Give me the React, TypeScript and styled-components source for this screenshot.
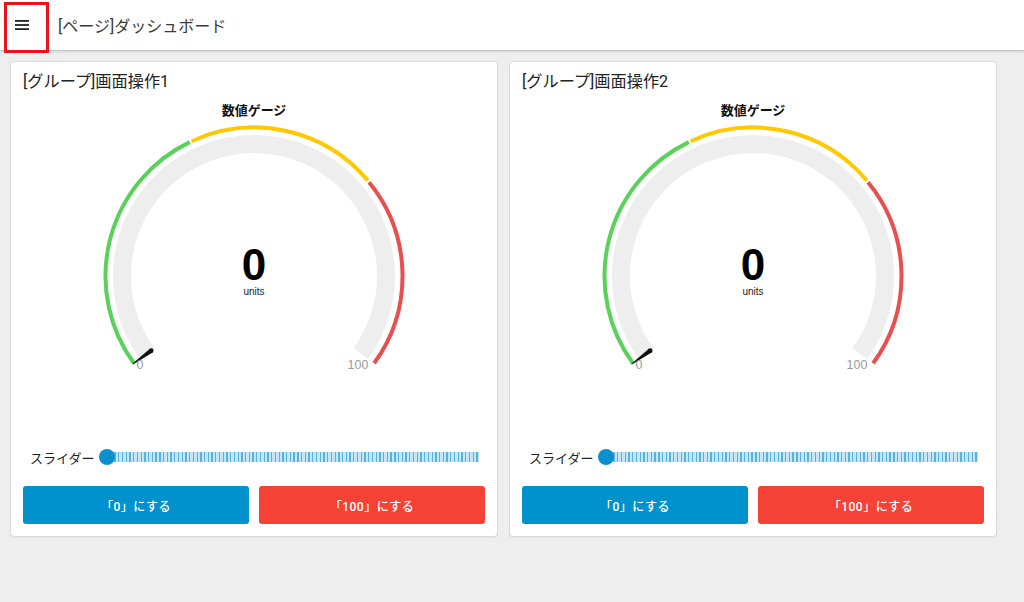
import React from 'react'
import styled, { createGlobalStyle } from 'styled-components'

const GlobalStyle = createGlobalStyle`
  html, body {
    margin: 0;
    padding: 0;
    background: #eeeeee;
    font-family: Roboto, "Noto Sans CJK JP", sans-serif;
  }
  #root {
    min-height: 602px;
  }
`

const Page = styled.div`
  position: relative;
  min-height: 602px;
  background: #eeeeee;
`

const HeaderBar = styled.header`
  height: 50px;
  display: flex;
  align-items: center;
  background: #ffffff;
  border-bottom: 1px solid #c9c9c9;
  box-shadow: 0 1px 2px rgba(0, 0, 0, 0.12);
`

const MenuButton = styled.div`
  width: 44px;
  height: 44px;
  display: flex;
  align-items: center;
  justify-content: center;
`

const HeaderTitle = styled.div`
  margin-left: 14px;
  font-size: 16px;
  color: #3a3a3a;
`

// red annotation frame drawn over the menu button
const Highlight = styled.div`
  position: absolute;
  box-sizing: border-box;
  left: 4px;
  top: 2px;
  width: 45px;
  height: 51px;
  border: 3px solid #e8141b;
`

const Groups = styled.main`
  display: grid;
  grid-template-columns: repeat(2, 488px);
  gap: 11px;
  padding: 10px;
  align-items: start;
`

const Card = styled.section`
  background: #ffffff;
  border: 1px solid #dadada;
  border-radius: 4px;
  padding: 8px 12px 12px;
  box-shadow: 0 1px 1px rgba(0, 0, 0, 0.05);
`

const GroupTitle = styled.div`
  height: 24px;
  line-height: 24px;
  font-size: 16.2px;
  color: #222;
`

const GaugeLabel = styled.div`
  margin-top: 8px;
  height: 18px;
  line-height: 18px;
  text-align: center;
  font-size: 13px;
  font-weight: bold;
  color: #111;
`

const GaugeSvg = styled.svg`
  display: block;
  width: 462px;
  height: 321px;
`

const SliderRow = styled.div`
  height: 32px;
  display: flex;
  align-items: center;
  padding: 0 6px 0 7px;
`

const SliderLabel = styled.span`
  font-size: 13px;
  color: #222;
  margin-right: 5px;
`

const Track = styled.div`
  position: relative;
  flex: 1;
  height: 10px;
  margin-left: 8px;
  background: repeating-linear-gradient(
    to right,
    #56b3e0 0,
    #56b3e0 1.3px,
    #c6e6f5 1.3px,
    #c6e6f5 3.73px
  );
`

const Thumb = styled.div`
  position: absolute;
  left: -8px;
  top: -3px;
  width: 16px;
  height: 16px;
  border-radius: 50%;
  background: #0a8fcf;
`

const ButtonRow = styled.div`
  margin-top: 13px;
  display: grid;
  grid-template-columns: 1fr 1fr;
  gap: 10px;
`

const ActionButton = styled.button<{ tone: 'blue' | 'red' }>`
  height: 38px;
  border: none;
  border-radius: 3px;
  background: ${(p) => (p.tone === 'blue' ? '#0092cd' : '#f44336')};
  color: #ffffff;
  font-family: Roboto, "Noto Sans CJK JP", sans-serif;
  font-size: 12px;
  font-weight: 500;
  letter-spacing: 0.5px;
  cursor: pointer;
`

const CX = 231
const CY = 156
const START = -126
const END = 126

const pt = (r: number, a: number) => {
  const rad = (a * Math.PI) / 180
  return [CX + r * Math.sin(rad), CY - r * Math.cos(rad)]
}

const arc = (r: number, a0: number, a1: number) => {
  const [x0, y0] = pt(r, a0)
  const [x1, y1] = pt(r, a1)
  const large = a1 - a0 > 180 ? 1 : 0
  return `M ${x0} ${y0} A ${r} ${r} 0 ${large} 1 ${x1} ${y1}`
}

const at = (pct: number) => START + ((END - START) * pct) / 100

const segments = [
  { from: 0, to: 40, color: '#5ad15a' },
  { from: 40, to: 70, color: '#ffc800' },
  { from: 70, to: 100, color: '#e85050' },
]

const Needle: React.FC<{ value: number }> = ({ value }) => {
  const a = at(value)
  const rad = (a * Math.PI) / 180
  const ux = Math.sin(rad)
  const uy = -Math.cos(rad)
  const nx = -uy
  const ny = ux
  const [bx, by] = pt(127, a)
  const [tx, ty] = pt(150, a)
  const w = 2.3
  const points = [
    [bx + nx * w, by + ny * w],
    [tx + nx * 0.4, ty + ny * 0.4],
    [tx - nx * 0.4, ty - ny * 0.4],
    [bx - nx * w, by - ny * w],
  ]
    .map((p) => p.join(','))
    .join(' ')
  return (
    <g fill="#111">
      <polygon points={points} />
      <circle cx={bx} cy={by} r={w} />
    </g>
  )
}

const Gauge: React.FC<{ value: number }> = ({ value }) => (
  <GaugeSvg viewBox="0 0 462 321">
    <path d={arc(132, START, END)} stroke="#eeeeee" strokeWidth={18} fill="none" />
    {segments.map((s) => (
      <path
        key={s.from}
        d={arc(148.5, at(s.from) + (s.from ? 0.4 : 0), at(s.to) - (s.to < 100 ? 0.4 : 0))}
        stroke={s.color}
        strokeWidth={4}
        fill="none"
      />
    ))}
    <Needle value={value} />
    <text
      x={CX}
      y={160}
      textAnchor="middle"
      fontFamily='"Liberation Sans", Arial, sans-serif'
      fontWeight="bold"
      fontSize={44}
      fill="#000"
    >
      {value}
    </text>
    <text
      x={CX}
      y={175}
      textAnchor="middle"
      fontFamily='"Liberation Sans", Arial, sans-serif'
      fontSize={10}
      fill="#222"
    >
      units
    </text>
    <text
      x={117}
      y={249}
      textAnchor="middle"
      fontFamily='"Liberation Sans", Arial, sans-serif'
      fontSize={12.5}
      fill="#9a9a9a"
    >
      0
    </text>
    <text
      x={335}
      y={249}
      textAnchor="middle"
      fontFamily='"Liberation Sans", Arial, sans-serif'
      fontSize={12.5}
      fill="#9a9a9a"
    >
      100
    </text>
  </GaugeSvg>
)

const MenuIcon = () => (
  <svg width="16" height="14" viewBox="0 0 16 14">
    <rect x="1" y="2" width="14" height="1.8" fill="#222" />
    <rect x="1" y="6.1" width="14" height="1.8" fill="#222" />
    <rect x="1" y="10.2" width="14" height="1.8" fill="#222" />
  </svg>
)

const groups = ['[グループ]画面操作1', '[グループ]画面操作2']

const App: React.FC = () => {
  return (
    <Page>
      <GlobalStyle />
      <HeaderBar>
        <MenuButton>
          <MenuIcon />
        </MenuButton>
        <HeaderTitle>[ページ]ダッシュボード</HeaderTitle>
      </HeaderBar>
      <Highlight />
      <Groups>
        {groups.map((title) => (
          <Card key={title}>
            <GroupTitle>{title}</GroupTitle>
            <GaugeLabel>数値ゲージ</GaugeLabel>
            <Gauge value={0} />
            <SliderRow>
              <SliderLabel>スライダー</SliderLabel>
              <Track>
                <Thumb />
              </Track>
            </SliderRow>
            <ButtonRow>
              <ActionButton tone="blue">「0」にする</ActionButton>
              <ActionButton tone="red">「100」にする</ActionButton>
            </ButtonRow>
          </Card>
        ))}
      </Groups>
    </Page>
  )
}

export default App
